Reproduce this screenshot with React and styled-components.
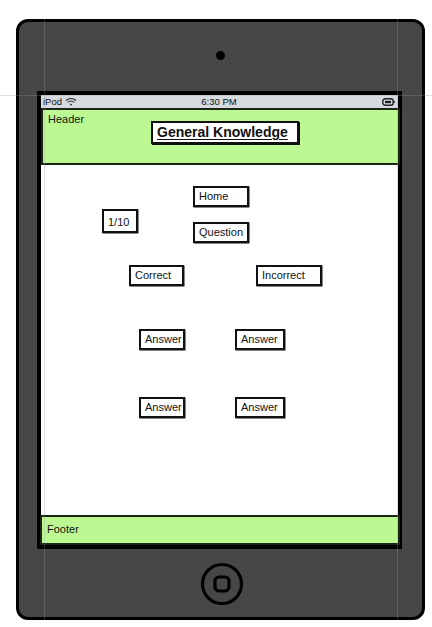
import React from 'react';
import styled, { createGlobalStyle } from 'styled-components';

const GlobalStyle = createGlobalStyle`
  html, body {
    margin: 0;
    padding: 0;
    background: #fff;
  }
  body {
    font-family: "Liberation Sans", Arial, sans-serif;
  }
`;

const Page = styled.div`
  position: relative;
  width: 432px;
  height: 627px;
  padding: 19px 0 0 16px;
  box-sizing: border-box;
`;

const Device = styled.div`
  width: 409px;
  height: 601px;
  box-sizing: border-box;
  border: 3px solid #000;
  border-radius: 12px;
  background: #474747;
  display: flex;
  flex-direction: column;
  align-items: flex-start;
`;

const Camera = styled.div`
  width: 9px;
  height: 9px;
  border-radius: 50%;
  background: #000;
  margin: 29px 0 0 197px;
`;

const Screen = styled.div`
  margin: 31px 0 0 18px;
  width: 365px;
  height: 458px;
  box-sizing: border-box;
  border: 4px solid #000;
  background: #fff;
  display: flex;
  flex-direction: column;
`;

const StatusBar = styled.div`
  height: 13px;
  background: #d5dbde;
  display: grid;
  grid-template-columns: 1fr auto 1fr;
  align-items: center;
  padding: 0 3px 0 2px;
  font-size: 9.5px;
  color: #111;
`;

const StatusLeft = styled.div`
  display: flex;
  align-items: center;
  gap: 3px;
`;

const StatusRight = styled.div`
  display: flex;
  justify-content: flex-end;
  align-items: center;
`;

const Header = styled.header`
  height: 57px;
  margin-right: -2px;
  box-sizing: border-box;
  background: #bcf993;
  border: 2px solid #1c2416;
  display: flex;
  align-items: flex-start;
  padding: 3px 0 0 5px;
`;

const Label = styled.span`
  font-size: 11px;
  color: #111;
  line-height: 13px;
`;

const Title = styled.div`
  margin: 8px 0 0 67px;
  width: 148px;
  height: 23px;
  box-sizing: border-box;
  background: #fff;
  border: 2px solid #111;
  box-shadow: 1px 1px 0 #111;
  padding-left: 4px;
  font-weight: bold;
  font-size: 14px;
  line-height: 18px;
  text-decoration: underline;
  text-underline-offset: 2px;
  color: #111;
`;

const Content = styled.main`
  flex: 1;
  display: flex;
  flex-direction: column;
  padding-top: 21px;
`;

const Row = styled.div`
  display: flex;
  align-items: flex-start;
  padding-left: ${p => p.$left}px;
  gap: ${p => p.$gap}px;
  margin-top: ${p => p.$top || 0}px;
`;

const Stack = styled.div`
  display: flex;
  flex-direction: column;
  gap: 15px;
`;

const Box = styled.div`
  width: ${p => p.$w}px;
  height: ${p => p.$h || 21}px;
  margin-top: ${p => p.$top || 0}px;
  box-sizing: border-box;
  border: 2px solid #111;
  box-shadow: 0.5px 0.5px 0 #111;
  padding: 1px 0 0 4px;
  font-size: 11px;
  line-height: 14px;
  color: #111;
  background: #fff;
`;

const Footer = styled.footer`
  height: 30px;
  margin: -1px -2px 0 -1px;
  box-sizing: border-box;
  background: #bcf993;
  border: 2px solid #1c2416;
  padding: 2px 0 0 5px;
`;

const HomeButton = styled.div`
  margin: 13px 0 0 181px;
  width: 44px;
  height: 44px;
`;

const Guide = styled.div`
  position: absolute;
  background: rgba(150, 150, 150, 0.3);
  pointer-events: none;
  ${p => p.$v
    ? `left: ${p.$at}px; top: 19px; width: 1px; height: 601px;`
    : `top: ${p.$at}px; left: 0; height: 1px; width: 432px;`}
`;

function Wifi() {
  return (
    <svg width="12" height="9" viewBox="0 0 12 9" fill="none" stroke="#222" strokeWidth="1.1">
      <path d="M1 3.5 Q6 -0.5 11 3.5" />
      <path d="M2.8 5.3 Q6 2.6 9.2 5.3" />
      <circle cx="6" cy="7.6" r="0.9" fill="#222" stroke="none" />
    </svg>
  );
}

function Battery() {
  return (
    <svg width="13" height="8" viewBox="0 0 13 8">
      <rect x="0.8" y="0.8" width="10.4" height="6.4" rx="2.5" fill="none" stroke="#222" strokeWidth="1.4" />
      <rect x="3" y="2.8" width="6" height="2.4" fill="#222" />
      <rect x="11.5" y="3" width="1.3" height="2" fill="#222" />
    </svg>
  );
}

export default function App() {
  return (
    <>
      <GlobalStyle />
      <Page>
        <Device>
          <Camera />
          <Screen>
            <StatusBar>
              <StatusLeft>iPod <Wifi /></StatusLeft>
              <span>6:30 PM</span>
              <StatusRight><Battery /></StatusRight>
            </StatusBar>
            <Header>
              <Label>Header</Label>
              <Title>General Knowledge</Title>
            </Header>
            <Content>
              <Row $left={61} $gap={55}>
                <Box $w={36} $h={24} $top={23} style={{ paddingTop: 4 }}>1/10</Box>
                <Stack>
                  <Box $w={56}>Home</Box>
                  <Box $w={56}>Question</Box>
                </Stack>
              </Row>
              <Row $left={88} $gap={72} $top={22}>
                <Box $w={55}>Correct</Box>
                <Box $w={66}>Incorrect</Box>
              </Row>
              <Row $left={98} $gap={50} $top={43}>
                <Box $w={46}>Answer</Box>
                <Box $w={50}>Answer</Box>
              </Row>
              <Row $left={98} $gap={50} $top={47}>
                <Box $w={46}>Answer</Box>
                <Box $w={50}>Answer</Box>
              </Row>
            </Content>
            <Footer>
              <Label>Footer</Label>
            </Footer>
          </Screen>
          <HomeButton>
            <svg width="44" height="44" viewBox="0 0 44 44" fill="none" stroke="#000" strokeWidth="3.2">
              <circle cx="22" cy="22" r="19.5" />
              <rect x="15" y="15" width="14" height="14" rx="4" />
            </svg>
          </HomeButton>
        </Device>
        <Guide $v $at={44} />
        <Guide $v $at={397} />
        <Guide $at={95} />
      </Page>
    </>
  );
}
